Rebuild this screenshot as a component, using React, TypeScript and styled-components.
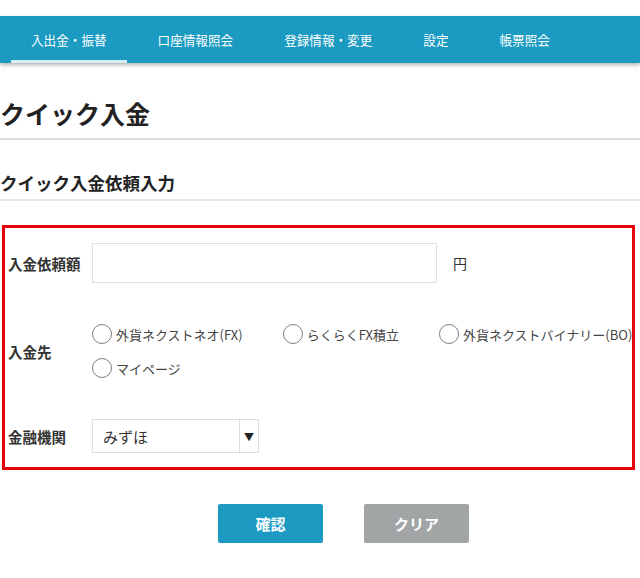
import styled, { createGlobalStyle } from "styled-components";

const GlobalStyle = createGlobalStyle`
  html, body {
    margin: 0;
    padding: 0;
    overflow: hidden;
    background: #fff;
  }
  body {
    font-family: "Noto Sans CJK JP", "Noto Sans", "Liberation Sans", sans-serif;
    color: #333;
  }
`;

const Page = styled.div`
  width: 687px;
  padding-top: 16px;
`;

const NavBar = styled.nav`
  display: flex;
  gap: 11px;
  height: 47px;
  padding-left: 11px;
  background: #1b9bc1;
  box-shadow: 0 2px 4px rgba(0, 0, 0, 0.3);
  width: 640px;
  box-sizing: border-box;
`;

const NavItem = styled.div<{ $active?: boolean }>`
  display: flex;
  align-items: center;
  padding: 3px 20px 0;
  height: 47px;
  box-sizing: border-box;
  color: #fff;
  font-size: 12.6px;
  border-bottom: 3px solid ${(p) => (p.$active ? "#d5edf5" : "transparent")};
`;

const Heading = styled.h1`
  margin: 0;
  padding: 33px 0 7px;
  font-size: 25px;
  line-height: 35px;
  font-weight: bold;
  color: #222;
  border-bottom: 2px solid #dcdcdc;
  width: 640px;
`;

const SubHeading = styled.h2`
  margin: 31px 0 0;
  padding: 0 0 4px;
  font-size: 17.5px;
  line-height: 24px;
  font-weight: bold;
  color: #222;
  border-bottom: 2px solid #e8e8e8;
  width: 640px;
`;

const FormSection = styled.section`
  position: relative;
  margin: 24px 0 0 2px;
  padding: 18px 0 17px 6px;
  display: grid;
  grid-template-columns: 84px 560px;
  row-gap: 34px;
  align-items: center;

  &::after {
    content: "";
    position: absolute;
    left: 0;
    top: 0;
    width: 633px;
    height: 100%;
    box-sizing: border-box;
    border: 3px solid #e8000b;
    pointer-events: none;
  }
`;

const Label = styled.div`
  font-size: 14.5px;
  font-weight: bold;
  color: #333;
`;

const FieldRow = styled.div`
  display: flex;
  align-items: center;
`;

const AmountInput = styled.div`
  width: 345px;
  height: 40px;
  box-sizing: border-box;
  border: 1px solid #e0e0e0;
`;

const Unit = styled.span`
  margin-left: 16px;
  font-size: 14px;
  color: #333;
`;

const RadioGroup = styled.div`
  display: flex;
  flex-wrap: wrap;
  column-gap: 40px;
`;

const RadioItem = styled.label`
  display: flex;
  align-items: center;
  height: 34px;
  gap: 4px;
  font-size: 13px;
  color: #444;
  white-space: nowrap;
`;

const RadioCircle = styled.span`
  width: 20px;
  height: 20px;
  box-sizing: border-box;
  border: 1.6px solid #7b8086;
  border-radius: 50%;
  background: #fff;
`;

const Select = styled.div`
  display: flex;
  width: 167px;
  height: 34px;
  box-sizing: border-box;
  border: 1px solid #dedede;
`;

const SelectValue = styled.div`
  flex: 1;
  display: flex;
  align-items: center;
  padding-left: 10px;
  font-size: 15px;
  color: #333;
`;

const SelectArrow = styled.div`
  width: 18px;
  display: flex;
  align-items: center;
  justify-content: center;
  border-left: 1px solid #dedede;
  font-size: 10px;
  color: #222;
`;

const ButtonRow = styled.div`
  display: flex;
  justify-content: center;
  gap: 41px;
  margin-top: 34px;
`;

const Button = styled.button<{ $variant: "primary" | "gray" }>`
  width: 105px;
  height: 39px;
  border: none;
  border-radius: 2px;
  font-family: inherit;
  font-size: 15px;
  font-weight: bold;
  color: #fff;
  background: ${(p) => (p.$variant === "primary" ? "#1c9ac2" : "#a2a5a6")};
`;

const navItems = ["入出金・振替", "口座情報照会", "登録情報・変更", "設定", "帳票照会"];
const destinations = [
  "外貨ネクストネオ(FX)",
  "らくらくFX積立",
  "外貨ネクストバイナリー(BO)",
  "マイページ",
];

export default function App() {
  return (
    <Page>
      <GlobalStyle />
      <NavBar>
        {navItems.map((item, i) => (
          <NavItem key={item} $active={i === 0}>
            {item}
          </NavItem>
        ))}
      </NavBar>
      <Heading>クイック入金</Heading>
      <SubHeading>クイック入金依頼入力</SubHeading>
      <FormSection>
        <Label>入金依頼額</Label>
        <FieldRow>
          <AmountInput />
          <Unit>円</Unit>
        </FieldRow>

        <Label>入金先</Label>
        <RadioGroup>
          {destinations.map((d) => (
            <RadioItem key={d}>
              <RadioCircle />
              {d}
            </RadioItem>
          ))}
        </RadioGroup>

        <Label>金融機関</Label>
        <FieldRow>
          <Select>
            <SelectValue>みずほ</SelectValue>
            <SelectArrow>▼</SelectArrow>
          </Select>
        </FieldRow>
      </FormSection>
      <ButtonRow>
        <Button $variant="primary">確認</Button>
        <Button $variant="gray">クリア</Button>
      </ButtonRow>
    </Page>
  );
}
